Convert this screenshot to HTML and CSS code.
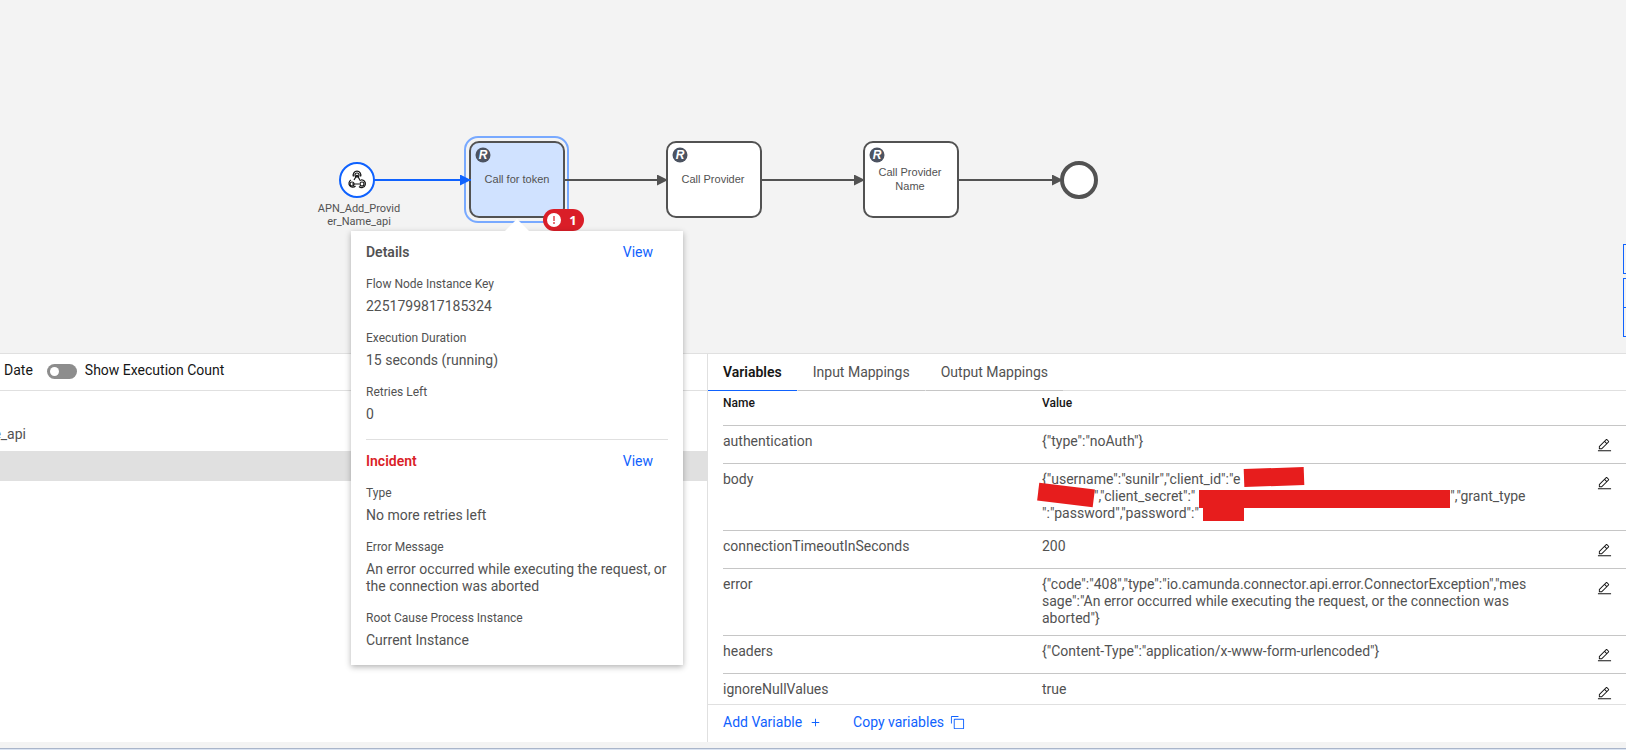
FILE: index.html
```html
<!DOCTYPE html>
<html lang="en">
<head>
    <meta charset="UTF-8">
    <meta name="viewport" content="width=device-width, initial-scale=1.0">
    <title>Process Instance</title>
    <link rel="stylesheet" href="styles.css">
</head>
<body>
    <svg class="sprite" aria-hidden="true">
        <symbol id="edit" viewBox="0 0 32 32"><path d="M2 26H30V28H2zM25.4 9c.8-.8.8-2 0-2.8l-3.6-3.6c-.8-.8-2-.8-2.8 0l-15 15V24h6.4L25.4 9zM20.4 4L24 7.6l-3 3L17.4 7 20.4 4zM6 22v-3.6l10-10 3.6 3.6-10 10H6z"/></symbol>
        <symbol id="add" viewBox="0 0 32 32"><path d="M17 15V8h-2v7H8v2h7v7h2v-7h7v-2z"/></symbol>
        <symbol id="copy" viewBox="0 0 32 32"><path d="M28 10V28H10V10H28m0-2H10a2 2 0 0 0-2 2V28a2 2 0 0 0 2 2H28a2 2 0 0 0 2-2V10a2 2 0 0 0-2-2ZM4 18H2V4A2 2 0 0 1 4 2H18V4H4Z"/></symbol>
    </svg>

    <main class="page">
        <section class="diagram">
            <svg class="canvas" width="100%" height="353">
                <defs>
                    <marker id="arrow" viewBox="0 0 11 11" refX="11" refY="5.5" markerWidth="11" markerHeight="11" markerUnits="userSpaceOnUse" orient="auto"><path d="M0 0L11 5.5L0 11z" fill="#525252"/></marker>
                    <marker id="arrow-blue" viewBox="0 0 11 11" refX="11" refY="5.5" markerWidth="11" markerHeight="11" markerUnits="userSpaceOnUse" orient="auto"><path d="M0 0L11 5.5L0 11z" fill="#0f62fe"/></marker>
                </defs>

                <!-- start event -->
                <circle class="start" cx="357" cy="180" r="17"/>
                <g class="webhook">
                    <circle cx="357" cy="175" r="2"/>
                    <circle cx="352" cy="184" r="2"/>
                    <circle cx="362" cy="184" r="2"/>
                    <path d="M357 175l-3 5M357 175l3.5 6M352 184h7"/>
                    <path d="M353.500 176.500a3.800 3.800 0 1 1 7 0M351 180a3.800 3.800 0 1 0 4.500 6M359 186.500a3.800 3.800 0 1 0 2-6.500"/>
                </g>
                <text class="event-label" x="359" y="212">APN_Add_Provid</text>
                <text class="event-label" x="359" y="225">er_Name_api</text>

                <!-- tasks -->
                <rect class="outline" x="465" y="137" width="103" height="85" rx="13"/>
                <rect class="task selected" x="470" y="142" width="94" height="75" rx="9"/>
                <circle class="rest" cx="483" cy="155" r="7.5"/>
                <text class="rest-letter" x="483" y="159">R</text>
                <text class="task-label" x="517" y="183">Call for token</text>

                <rect class="task" x="667" y="142" width="94" height="75" rx="9"/>
                <circle class="rest" cx="680" cy="155" r="7.5"/>
                <text class="rest-letter" x="680" y="159">R</text>
                <text class="task-label" x="713" y="183">Call Provider</text>

                <rect class="task" x="864" y="142" width="94" height="75" rx="9"/>
                <circle class="rest" cx="877" cy="155" r="7.5"/>
                <text class="rest-letter" x="877" y="159">R</text>
                <text class="task-label" x="910" y="176">Call Provider</text>
                <text class="task-label" x="910" y="190">Name</text>

                <circle class="end" cx="1079" cy="180" r="17"/>

                <!-- sequence flows -->
                <path class="flow taken" d="M374 180H471" marker-end="url(#arrow-blue)"/>
                <path class="flow" d="M564 180H668" marker-end="url(#arrow)"/>
                <path class="flow" d="M761 180H865" marker-end="url(#arrow)"/>
                <path class="flow" d="M958 180H1063" marker-end="url(#arrow)"/>

                <!-- incident badge -->
                <rect x="543" y="209" width="41" height="22" rx="11" fill="#da1e28"/>
                <circle cx="554" cy="220" r="7" fill="#fff"/>
                <path d="M553 216h2v5h-2zM553 222h2v2h-2z" fill="#e8747a"/>
                <text class="badge-count" x="573" y="225">1</text>
            </svg>

            <div class="zoom-controls">
                <button class="zoom-button reset" aria-label="Reset diagram zoom"></button>
                <button class="zoom-button" aria-label="Zoom in diagram"></button>
                <button class="zoom-button" aria-label="Zoom out diagram"></button>
            </div>

            <div class="popover">
                <div class="popover-header">
                    <h2>Details</h2>
                    <a href="#details">View</a>
                </div>
                <dl>
                    <dt>Flow Node Instance Key</dt>
                    <dd>2251799817185324</dd>
                    <dt>Execution Duration</dt>
                    <dd>15 seconds (running)</dd>
                    <dt>Retries Left</dt>
                    <dd>0</dd>
                </dl>
                <hr>
                <div class="popover-header">
                    <h2 class="incident">Incident</h2>
                    <a href="#incident">View</a>
                </div>
                <dl>
                    <dt>Type</dt>
                    <dd>No more retries left</dd>
                    <dt>Error Message</dt>
                    <dd>An error occurred while executing the request, or<br>the connection was aborted</dd>
                    <dt>Root Cause Process Instance</dt>
                    <dd>Current Instance</dd>
                </dl>
            </div>
        </section>

        <div class="panels">
            <section class="history">
                <div class="history-header">
                    <span>Date</span>
                    <input type="checkbox" class="toggle" id="execution-count">
                    <label for="execution-count">Show Execution Count</label>
                </div>
                <div class="tree">
                    <div class="tree-row"><span>e_api</span></div>
                    <div class="tree-row active"></div>
                </div>
            </section>

            <section class="variables">
                <nav class="tabs">
                    <button class="tab current">Variables</button>
                    <button class="tab">Input Mappings</button>
                    <button class="tab">Output Mappings</button>
                </nav>
                <div class="table-scroll">
                    <table>
                        <thead>
                            <tr><th class="name">Name</th><th>Value</th><th class="actions"></th></tr>
                        </thead>
                        <tbody>
                            <tr>
                                <td>authentication</td>
                                <td>{"type":"noAuth"}</td>
                                <td><button class="edit" aria-label="Edit authentication"><svg><use href="#edit"/></svg></button></td>
                            </tr>
                            <tr>
                                <td>body</td>
                                <td>{"username":"sunilr","client_id":"e<span class="redacted id"></span><br><span class="redacted id-rest"></span>","client_secret":"<span class="redacted secret"></span>","grant_type<br>":"password","password":"<span class="redacted password"></span></td>
                                <td><button class="edit" aria-label="Edit body"><svg><use href="#edit"/></svg></button></td>
                            </tr>
                            <tr>
                                <td>connectionTimeoutInSeconds</td>
                                <td>200</td>
                                <td><button class="edit" aria-label="Edit connectionTimeoutInSeconds"><svg><use href="#edit"/></svg></button></td>
                            </tr>
                            <tr>
                                <td>error</td>
                                <td>{"code":"408","type":"io.camunda.connector.api.error.ConnectorException","mes<br>sage":"An error occurred while executing the request, or the connection was<br>aborted"}</td>
                                <td><button class="edit" aria-label="Edit error"><svg><use href="#edit"/></svg></button></td>
                            </tr>
                            <tr>
                                <td>headers</td>
                                <td>{"Content-Type":"application/x-www-form-urlencoded"}</td>
                                <td><button class="edit" aria-label="Edit headers"><svg><use href="#edit"/></svg></button></td>
                            </tr>
                            <tr>
                                <td>ignoreNullValues</td>
                                <td>true</td>
                                <td><button class="edit" aria-label="Edit ignoreNullValues"><svg><use href="#edit"/></svg></button></td>
                            </tr>
                        </tbody>
                    </table>
                </div>
                <div class="variables-footer">
                    <button class="link-button">Add Variable <svg><use href="#add"/></svg></button>
                    <button class="link-button">Copy variables <svg><use href="#copy"/></svg></button>
                </div>
            </section>
        </div>
    </main>
</body>
</html>
```

FILE: styles.css
```css
* {
    box-sizing: border-box;
}
body {
    margin: 0;
    font-family: Roboto, "Liberation Sans", sans-serif;
    font-size: 14px;
    line-height: 17px;
    color: #525252;
    background-color: #f3f3f3;
}
button {
    padding: 0;
    border: none;
    background: none;
    font: inherit;
    color: inherit;
    cursor: pointer;
}
a {
    color: #0f62fe;
    text-decoration: none;
}
.sprite {
    display: none;
}
.page {
    display: flex;
    flex-direction: column;
    height: 100vh;
    padding-bottom: 7px;
    border-bottom: 1px solid #dbe4f2;
    box-shadow: inset 0 -1px #a9b5ca;
}

/* diagram */
.diagram {
    position: relative;
}
.canvas {
    display: block;
}
.start {
    fill: #fff;
    stroke: #0f62fe;
    stroke-width: 2;
}
.end {
    fill: #fff;
    stroke: #525252;
    stroke-width: 4;
}
.webhook {
    fill: none;
    stroke: #161616;
    stroke-width: 1.2;
}
.task {
    fill: #fff;
    stroke: #525252;
    stroke-width: 2;
}
.task.selected {
    fill: #d0e2ff;
}
.outline {
    fill: none;
    stroke: #78a9ff;
    stroke-width: 2;
}
.flow {
    fill: none;
    stroke: #525252;
    stroke-width: 2;
}
.flow.taken {
    stroke: #0f62fe;
}
.task-label,
.event-label,
.badge-count,
.rest-letter {
    text-anchor: middle;
    fill: #525252;
}
.task-label {
    font: 11px "Liberation Sans", sans-serif;
}
.event-label {
    font-size: 11px;
}
.badge-count {
    font: bold 13px "Open Sans", sans-serif;
    fill: #fff;
}
.rest {
    fill: #4c5361;
}
.rest-letter {
    font: italic bold 12px "Liberation Sans", sans-serif;
    fill: #fff;
}
.zoom-controls {
    position: absolute;
    top: 244px;
    right: 0;
    width: 3px;
    overflow: hidden;
}
.zoom-button {
    display: block;
    width: 30px;
    height: 30px;
    border: 1px solid #0f62fe;
}
.zoom-button + .zoom-button {
    margin-top: -1px;
}
.zoom-button.reset + .zoom-button {
    margin-top: 4px;
}

/* popover */
.popover {
    position: absolute;
    z-index: 1;
    top: 231px;
    left: 351px;
    width: 332px;
    padding: 0 15px 16px;
    background-color: #fff;
    box-shadow: 0 2px 6px rgba(0, 0, 0, 0.3);
}
.popover::before {
    content: "";
    position: absolute;
    top: -12px;
    left: 154px;
    border: 12px solid transparent;
    border-top: none;
    border-bottom-color: #fff;
}
.popover-header {
    display: flex;
    justify-content: space-between;
    padding: 13px 15px 15px 0;
}
.popover h2 {
    margin: 0;
    font-size: 14px;
    font-weight: 600;
}
.popover .incident {
    color: #da1e28;
}
.popover dl {
    margin: 0;
}
.popover dt {
    margin-bottom: 6px;
    font-size: 12px;
    line-height: 16px;
}
.popover dd {
    margin: 0 0 15px;
}
.popover dd:last-child {
    margin-bottom: 0;
}
.popover hr {
    height: 1px;
    margin: 16px 0 0;
    border: none;
    background-color: #e0e0e0;
}

/* instance history */
.panels {
    display: flex;
    flex: 1;
    min-height: 0;
    background-color: #fff;
    border-top: 1px solid #e0e0e0;
}
.history {
    flex: 0 0 708px;
    border-right: 1px solid #e0e0e0;
}
.history-header {
    display: flex;
    align-items: center;
    height: 37px;
    padding: 0 4px 3px;
    border-bottom: 1px solid #e0e0e0;
    color: #161616;
}
.toggle {
    appearance: none;
    display: flex;
    width: 30px;
    height: 15px;
    margin: 2px 8px 0 14px;
    padding: 3px;
    border-radius: 8px;
    background-color: #8d8d8d;
}
.toggle::before {
    content: "";
    width: 9px;
    height: 9px;
    border-radius: 50%;
    background-color: #fff;
}
.toggle:checked {
    justify-content: flex-end;
    background-color: #198038;
}
.tree {
    padding-top: 30px;
}
.tree-row {
    height: 30px;
    padding-top: 5px;
}
.tree-row span {
    display: flex;
    justify-content: flex-end;
    width: 26px;
    overflow: hidden;
}
.tree-row.active {
    background-color: #e0e0e0;
}

/* variables */
.variables {
    display: flex;
    flex: 1;
    flex-direction: column;
    min-width: 0;
}
.tabs {
    display: flex;
    gap: 1px;
    height: 37px;
    border-bottom: 1px solid #e0e0e0;
}
.tab {
    height: 37px;
    padding: 0 15px;
    border-bottom: 1px solid #c6c6c6;
}
.tab.current {
    border-bottom-color: #0f62fe;
    font-weight: 600;
    color: #161616;
}
.table-scroll {
    flex: 1;
    min-height: 0;
    padding-left: 15px;
    overflow: hidden;
}
table {
    width: 100%;
    table-layout: fixed;
    border-spacing: 0;
}
th,
td {
    padding: 7px 0 8px;
    border-bottom: 1px solid #c6c6c6;
    text-align: left;
    vertical-align: top;
}
th {
    height: 35px;
    padding-top: 4px;
    font-size: 12px;
    font-weight: 500;
    color: #161616;
}
td {
    height: 38px;
}
.name {
    width: 319px;
}
.actions {
    width: 60px;
}
td:last-child {
    padding: 12px 14px 0 0;
    text-align: right;
}
.edit svg {
    display: block;
    width: 15px;
    height: 15px;
    fill: #161616;
}

/* blacked out credentials */
.redacted {
    display: inline-block;
    height: 18px;
    margin: -4px 0;
    background-color: #e71d1d;
}
.redacted.id {
    width: 60px;
    margin-left: 4px;
    vertical-align: 2px;
    transform: rotate(-2deg);
}
.redacted.id-rest {
    width: 56px;
    margin-left: -4px;
    vertical-align: 1px;
    transform: rotate(7deg);
}
.redacted.secret {
    width: 251px;
    margin-left: 4px;
    vertical-align: -3px;
}
.redacted.password {
    width: 41px;
    height: 14px;
    margin-left: 4px;
    vertical-align: 1px;
}
.variables-footer {
    display: flex;
    gap: 30px;
    align-items: center;
    height: 38px;
    padding: 0 15px 2px;
    border-top: 1px solid #e0e0e0;
    color: #0f62fe;
}
.link-button {
    display: flex;
    gap: 6px;
    align-items: center;
}
.link-button svg {
    width: 15px;
    height: 15px;
    fill: #0f62fe;
}
```
